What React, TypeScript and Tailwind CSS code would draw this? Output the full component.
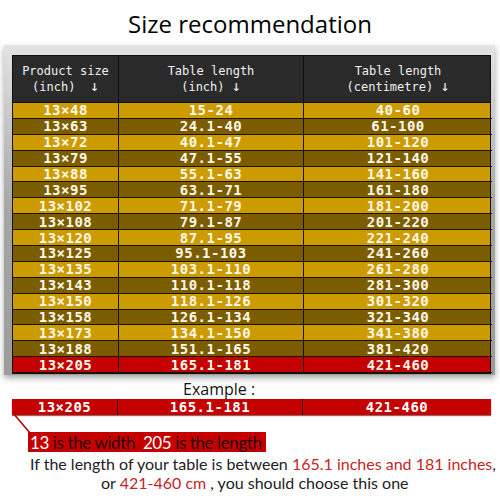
const rows: [string, string, string][] = [
  ['13×48', '15-24', '40-60'],
  ['13×63', '24.1-40', '61-100'],
  ['13×72', '40.1-47', '101-120'],
  ['13×79', '47.1-55', '121-140'],
  ['13×88', '55.1-63', '141-160'],
  ['13×95', '63.1-71', '161-180'],
  ['13×102', '71.1-79', '181-200'],
  ['13×108', '79.1-87', '201-220'],
  ['13×120', '87.1-95', '221-240'],
  ['13×125', '95.1-103', '241-260'],
  ['13×135', '103.1-110', '261-280'],
  ['13×143', '110.1-118', '281-300'],
  ['13×150', '118.1-126', '301-320'],
  ['13×158', '126.1-134', '321-340'],
  ['13×173', '134.1-150', '341-380'],
  ['13×188', '151.1-165', '381-420'],
  ['13×205', '165.1-181', '421-460'],
];

const mono = "font-['DejaVu_Sans_Mono',monospace]";
const sans = "font-['Open_Sans','Noto_Sans',sans-serif]";
const body = "font-['Lato','Noto_Sans',sans-serif]";

function rowBg(i: number) {
  if (i === rows.length - 1) return 'bg-[#c40000]';
  return i % 2 === 0 ? 'bg-[#cc9b00]' : 'bg-[#7b5d00]';
}

function DataRow({ cells, bg }: { cells: [string, string, string]; bg: string }) {
  return (
    <div className={`grid h-[15.9px] grid-cols-[106px_185px_188px] ${bg}`}>
      {cells.map((c, j) => (
        <div
          key={j}
          className={`flex items-center justify-center border-b border-[#1a1200] text-[14px] font-bold leading-none tracking-[0.5px] text-[#fff8e6] ${
            j < 2 ? 'border-r' : ''
          }`}
        >
          {c}
        </div>
      ))}
    </div>
  );
}

function Arrow() {
  return <span className="text-[15px] leading-none">↓</span>;
}

export default function App() {
  return (
    <div className={`relative h-[500px] w-[500px] overflow-hidden bg-white ${sans}`}>
      {/* Titre */}
      <div className="flex h-[45px] items-center justify-center pt-[2px] text-[24px] leading-none text-black">
        Size recommendation
      </div>

      {/* Tableau */}
      <div className="ml-[4px] w-[491px] bg-gradient-to-b from-[#e4e4e4] via-[#a6a6a6] to-[#9c9c9c] pb-[1px] pl-[8px] pr-[4px] pt-[10px] shadow-[0_3px_6px_rgba(0,0,0,0.35)]">
        <div className={`border border-[#111] ${mono}`}>
          <div className="grid h-[46px] grid-cols-[106px_185px_188px] bg-[#2a2a2a] text-[12px] leading-[15px] text-[#f0f0f0]">
            <div className="flex flex-col items-center justify-center border-r border-[#111]">
              <span>Product size</span>
              <span className="whitespace-pre">
                (inch)  <Arrow />
              </span>
            </div>
            <div className="flex flex-col items-center justify-center border-r border-[#111]">
              <span>Table length</span>
              <span className="whitespace-pre">
                (inch) <Arrow />
              </span>
            </div>
            <div className="flex flex-col items-center justify-center">
              <span>Table length</span>
              <span className="whitespace-pre">
                (centimetre) <Arrow />
              </span>
            </div>
          </div>
          <div className="border-t border-[#111]">
            {rows.map((r, i) => (
              <DataRow key={i} cells={r} bg={rowBg(i)} />
            ))}
          </div>
        </div>
      </div>

      {/* Exemple */}
      <div className="mt-[4px] pl-[183px] text-[16px] leading-[20px] text-[#111]">Example :</div>
      <div className={`ml-[12px] w-[479px] ${mono}`}>
        <div className="grid h-[16px] grid-cols-[106px_185px_188px] bg-[#c40000] shadow-[0_1px_1px_rgba(80,0,0,0.6)]">
          {rows[rows.length - 1].map((c, j) => (
            <div
              key={j}
              className={`flex items-center justify-center text-[14px] font-bold leading-none tracking-[0.5px] text-white ${
                j < 2 ? 'border-r border-[#3a0000]' : ''
              }`}
            >
              {c}
            </div>
          ))}
        </div>
      </div>

      <svg className="absolute left-[12px] top-[412px]" width="20" height="22" viewBox="0 0 20 22">
        <line x1="1" y1="1" x2="18" y2="21" stroke="#b00000" strokeWidth="1.5" />
      </svg>

      <div className={`ml-[28px] mt-[17px] flex h-[20px] w-fit items-center whitespace-nowrap bg-[#c40000] pl-[2px] pr-[4px] text-[17px] leading-none tracking-[-0.4px] text-[#2a0505] ${body}`}>
        <span className="text-white">13</span>
        <span className="whitespace-pre"> is the width  </span>
        <span className="text-white">205</span>
        <span className="whitespace-pre"> is the length</span>
      </div>

      <div className={`mt-[2px] whitespace-nowrap pl-[30px] text-[16px] leading-[19px] text-[#222] ${body}`}>
        If the length of your table is between{' '}
        <span className="text-[#c4252a]">165.1 inches and 181 inches</span>,
      </div>
      <div className={`whitespace-nowrap pl-[101px] text-[16px] leading-[19px] text-[#222] ${body}`}>
        or <span className="text-[#c4252a]">421-460 cm</span> , you should choose this one
      </div>
    </div>
  );
}
